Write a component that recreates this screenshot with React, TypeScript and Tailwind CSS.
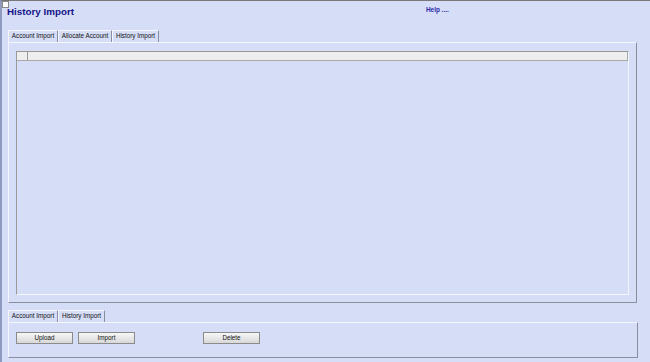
import React from "react";

const Tab = ({ label, w }: { label: string; w: string }) => (
  <div
    className={`${w} h-[12px] flex items-center justify-center border-l border-l-[#f4f6fd] border-t border-t-[#f4f6fd] border-r border-r-[#8a8f9f] text-[6.3px] leading-none text-[#111]`}
  >
    {label}
  </div>
);

const Btn = ({ label, ml }: { label: string; ml: string }) => (
  <div
    className={`${ml} w-[57px] h-[12px] flex items-center justify-center border border-[#8b8b8b] bg-gradient-to-b from-[#f7f7f7] to-[#d8d8d8] text-[6.3px] leading-none text-[#111]`}
  >
    {label}
  </div>
);

export default function App() {
  return (
    <div className="relative w-[650px] h-[362px] bg-[#d6ddf6] border-t border-t-[#777] border-l-2 border-l-[#8e9bbf] font-['Liberation_Sans',Arial,sans-serif] overflow-hidden">
      <div className="absolute top-0 left-0 w-[7px] h-[7px] bg-white border border-[#888]" />
      <div className="h-[29px] flex items-start">
        <div className="w-[424px] pl-[5px] pt-[5px] text-[9.8px] leading-[12px] font-bold text-[#14148a]">
          History Import
        </div>
        <div className="pt-[5px] text-[6.4px] leading-[8px] font-bold text-[#2b2ba8]">
          Help ....
        </div>
      </div>
      <div className="ml-[6px] flex">
        <Tab label="Account Import" w="w-[50px]" />
        <Tab label="Allocate Account" w="w-[54px]" />
        <Tab label="History Import" w="w-[47px]" />
      </div>
      <div className="ml-[6px] w-[629px] h-[261px] border border-t-[#f4f6fd] border-l-[#f4f6fd] border-r-[#8a8f9f] border-b-[#8a8f9f] pt-[8px] pl-[7px]">
        <div className="w-[613px] h-[244px] border border-t-[#9a9a9a] border-l-[#9a9a9a] border-r-[#f4f6fd] border-b-[#f4f6fd]">
          <div className="flex h-[9px] bg-[#eeeeee] border-b border-b-[#a8a8a8] border-r border-r-[#a8a8a8]">
            <div className="w-[11px] border-r border-r-[#9a9a9a]" />
          </div>
        </div>
      </div>
      <div className="ml-[6px] mt-[7px] flex">
        <Tab label="Account Import" w="w-[50px]" />
        <Tab label="History Import" w="w-[47px]" />
      </div>
      <div className="ml-[6px] w-[630px] h-[36px] border border-t-[#f4f6fd] border-l-[#f4f6fd] border-r-[#8a8f9f] border-b-[#8a8f9f] pt-[9px] pl-[7px] flex items-start">
        <Btn label="Upload" ml="ml-0" />
        <Btn label="Import" ml="ml-[5px]" />
        <Btn label="Delete" ml="ml-[68px]" />
      </div>
    </div>
  );
}
